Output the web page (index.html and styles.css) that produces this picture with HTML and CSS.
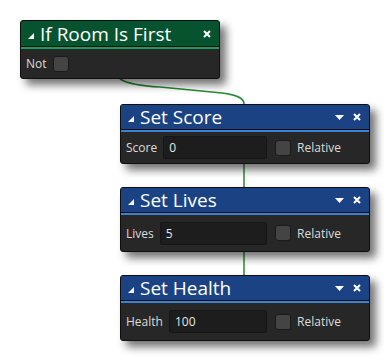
FILE: index.html
```
<!DOCTYPE html>
<html lang="en">
<head>
    <meta charset="UTF-8">
    <meta name="viewport" content="width=device-width, initial-scale=1.0">
    <title>Action Graph</title>
    <link rel="stylesheet" href="styles.css">
</head>
<body>

    <!-- Node graph canvas -->
    <div class="graph">
        <svg class="wires" width="390" height="361" viewBox="0 0 390 361">
            <path d="M120,79 C128,84 140,86 160,87 L222,93 C237,95 244,98 244,104" />
            <path d="M244,163 L244,187" />
            <path d="M244,251 L244,275" />
        </svg>

        <!-- If Room Is First -->
        <div class="node node-green node-if">
            <div class="node-header">
                <svg class="collapse" width="6" height="6" viewBox="0 0 6 6"><polygon points="6,0 6,6 0,6" /></svg>
                <span class="node-title">If Room Is First</span>
                <svg class="close" width="8" height="8" viewBox="0 0 8 8"><path d="M1,1 L7,7 M7,1 L1,7" /></svg>
            </div>
            <div class="node-accent"></div>
            <div class="node-body">
                <span class="label">Not</span>
                <span class="check"></span>
            </div>
        </div>

        <!-- Set Score -->
        <div class="node node-blue node-score">
            <div class="node-header">
                <svg class="collapse" width="6" height="6" viewBox="0 0 6 6"><polygon points="6,0 6,6 0,6" /></svg>
                <span class="node-title">Set Score</span>
                <svg class="dropdown" width="9" height="5" viewBox="0 0 9 5"><polygon points="0,0 9,0 4.5,5" /></svg>
                <svg class="close" width="8" height="8" viewBox="0 0 8 8"><path d="M1,1 L7,7 M7,1 L1,7" /></svg>
            </div>
            <div class="node-accent"></div>
            <div class="node-body">
                <span class="label">Score</span>
                <div class="field">0</div>
                <span class="check"></span>
                <span class="label relative">Relative</span>
            </div>
        </div>

        <!-- Set Lives -->
        <div class="node node-blue node-lives">
            <div class="node-header">
                <svg class="collapse" width="6" height="6" viewBox="0 0 6 6"><polygon points="6,0 6,6 0,6" /></svg>
                <span class="node-title">Set Lives</span>
                <svg class="dropdown" width="9" height="5" viewBox="0 0 9 5"><polygon points="0,0 9,0 4.5,5" /></svg>
                <svg class="close" width="8" height="8" viewBox="0 0 8 8"><path d="M1,1 L7,7 M7,1 L1,7" /></svg>
            </div>
            <div class="node-accent"></div>
            <div class="node-body">
                <span class="label">Lives</span>
                <div class="field">5</div>
                <span class="check"></span>
                <span class="label relative">Relative</span>
            </div>
        </div>

        <!-- Set Health -->
        <div class="node node-blue node-health">
            <div class="node-header">
                <svg class="collapse" width="6" height="6" viewBox="0 0 6 6"><polygon points="6,0 6,6 0,6" /></svg>
                <span class="node-title">Set Health</span>
                <svg class="dropdown" width="9" height="5" viewBox="0 0 9 5"><polygon points="0,0 9,0 4.5,5" /></svg>
                <svg class="close" width="8" height="8" viewBox="0 0 8 8"><path d="M1,1 L7,7 M7,1 L1,7" /></svg>
            </div>
            <div class="node-accent"></div>
            <div class="node-body">
                <span class="label">Health</span>
                <div class="field">100</div>
                <span class="check"></span>
                <span class="label relative">Relative</span>
            </div>
        </div>
    </div>

</body>
</html>
```

FILE: styles.css
```
* {
    margin: 0;
    padding: 0;
    box-sizing: border-box;
}

body {
    background: #ffffff;
    font-family: "Open Sans", "DejaVu Sans", sans-serif;
    color: #e6e6e6;
}

/* Canvas */
.graph {
    position: relative;
    width: 390px;
    height: 361px;
    overflow: hidden;
}

.wires {
    position: absolute;
    left: 0;
    top: 0;
}

.wires path {
    fill: none;
    stroke: #2a8a34;
    stroke-width: 1.5;
}

/* Nodes */
.node {
    position: absolute;
    display: flex;
    flex-direction: column;
    background-color: #272727;
    border: 1px solid #0f0f0f;
    border-radius: 3px;
    box-shadow: 6px 6px 8px rgba(0, 0, 0, 0.55);
}

.node-if     { left: 20px;  top: 20px;  width: 200px; }
.node-score  { left: 120px; top: 104px; width: 250px; }
.node-lives  { left: 120px; top: 187px; width: 250px; }
.node-health { left: 120px; top: 275px; width: 250px; }

.node-header {
    display: flex;
    align-items: center;
    height: 25px;
    padding: 0 8px 0 7px;
    border-bottom: 1px solid #0f0f0f;
    border-radius: 2px 2px 0 0;
}

.node-if .node-header {
    height: 26px;
}

.node-green .node-header { background-color: #07532f; }
.node-blue .node-header  { background-color: #1b4384; }

.node-accent {
    height: 2px;
}

.node-green .node-accent { background-color: #1c9c5c; }
.node-blue .node-accent  { background-color: #3b82d4; }

.collapse {
    margin-top: 4px;
    flex-shrink: 0;
}

.collapse polygon {
    fill: #ffffff;
}

.node-title {
    flex: 1;
    margin-left: 6px;
    font-size: 19px;
    line-height: 24px;
    color: #ffffff;
    white-space: nowrap;
}

.dropdown {
    margin-right: 9px;
    margin-top: 1px;
}

.dropdown polygon {
    fill: #ffffff;
}

.close path {
    stroke: #ffffff;
    stroke-width: 2;
}

/* Body row */
.node-body {
    display: flex;
    align-items: center;
    padding: 0 28px 0 5px;
    font-size: 12px;
}

.node-if .node-body     { height: 29px; }
.node-score .node-body  { height: 31px; }
.node-lives .node-body  { height: 36px; }
.node-health .node-body { height: 37px; }

.label {
    color: #dcdcdc;
    white-space: nowrap;
}

.field {
    flex: 1;
    height: 23px;
    margin-left: 6px;
    padding-left: 5px;
    line-height: 21px;
    background-color: #1d1d1d;
    border: 1px solid #161616;
    border-radius: 2px;
    color: #e8e8e8;
}

.check {
    width: 16px;
    height: 16px;
    margin-left: 8px;
    background-color: #444444;
    border: 1px solid #1a1a1a;
    border-radius: 3px;
    flex-shrink: 0;
}

.node-if .check {
    margin-left: 6px;
}

.relative {
    margin-left: 6px;
}
```
